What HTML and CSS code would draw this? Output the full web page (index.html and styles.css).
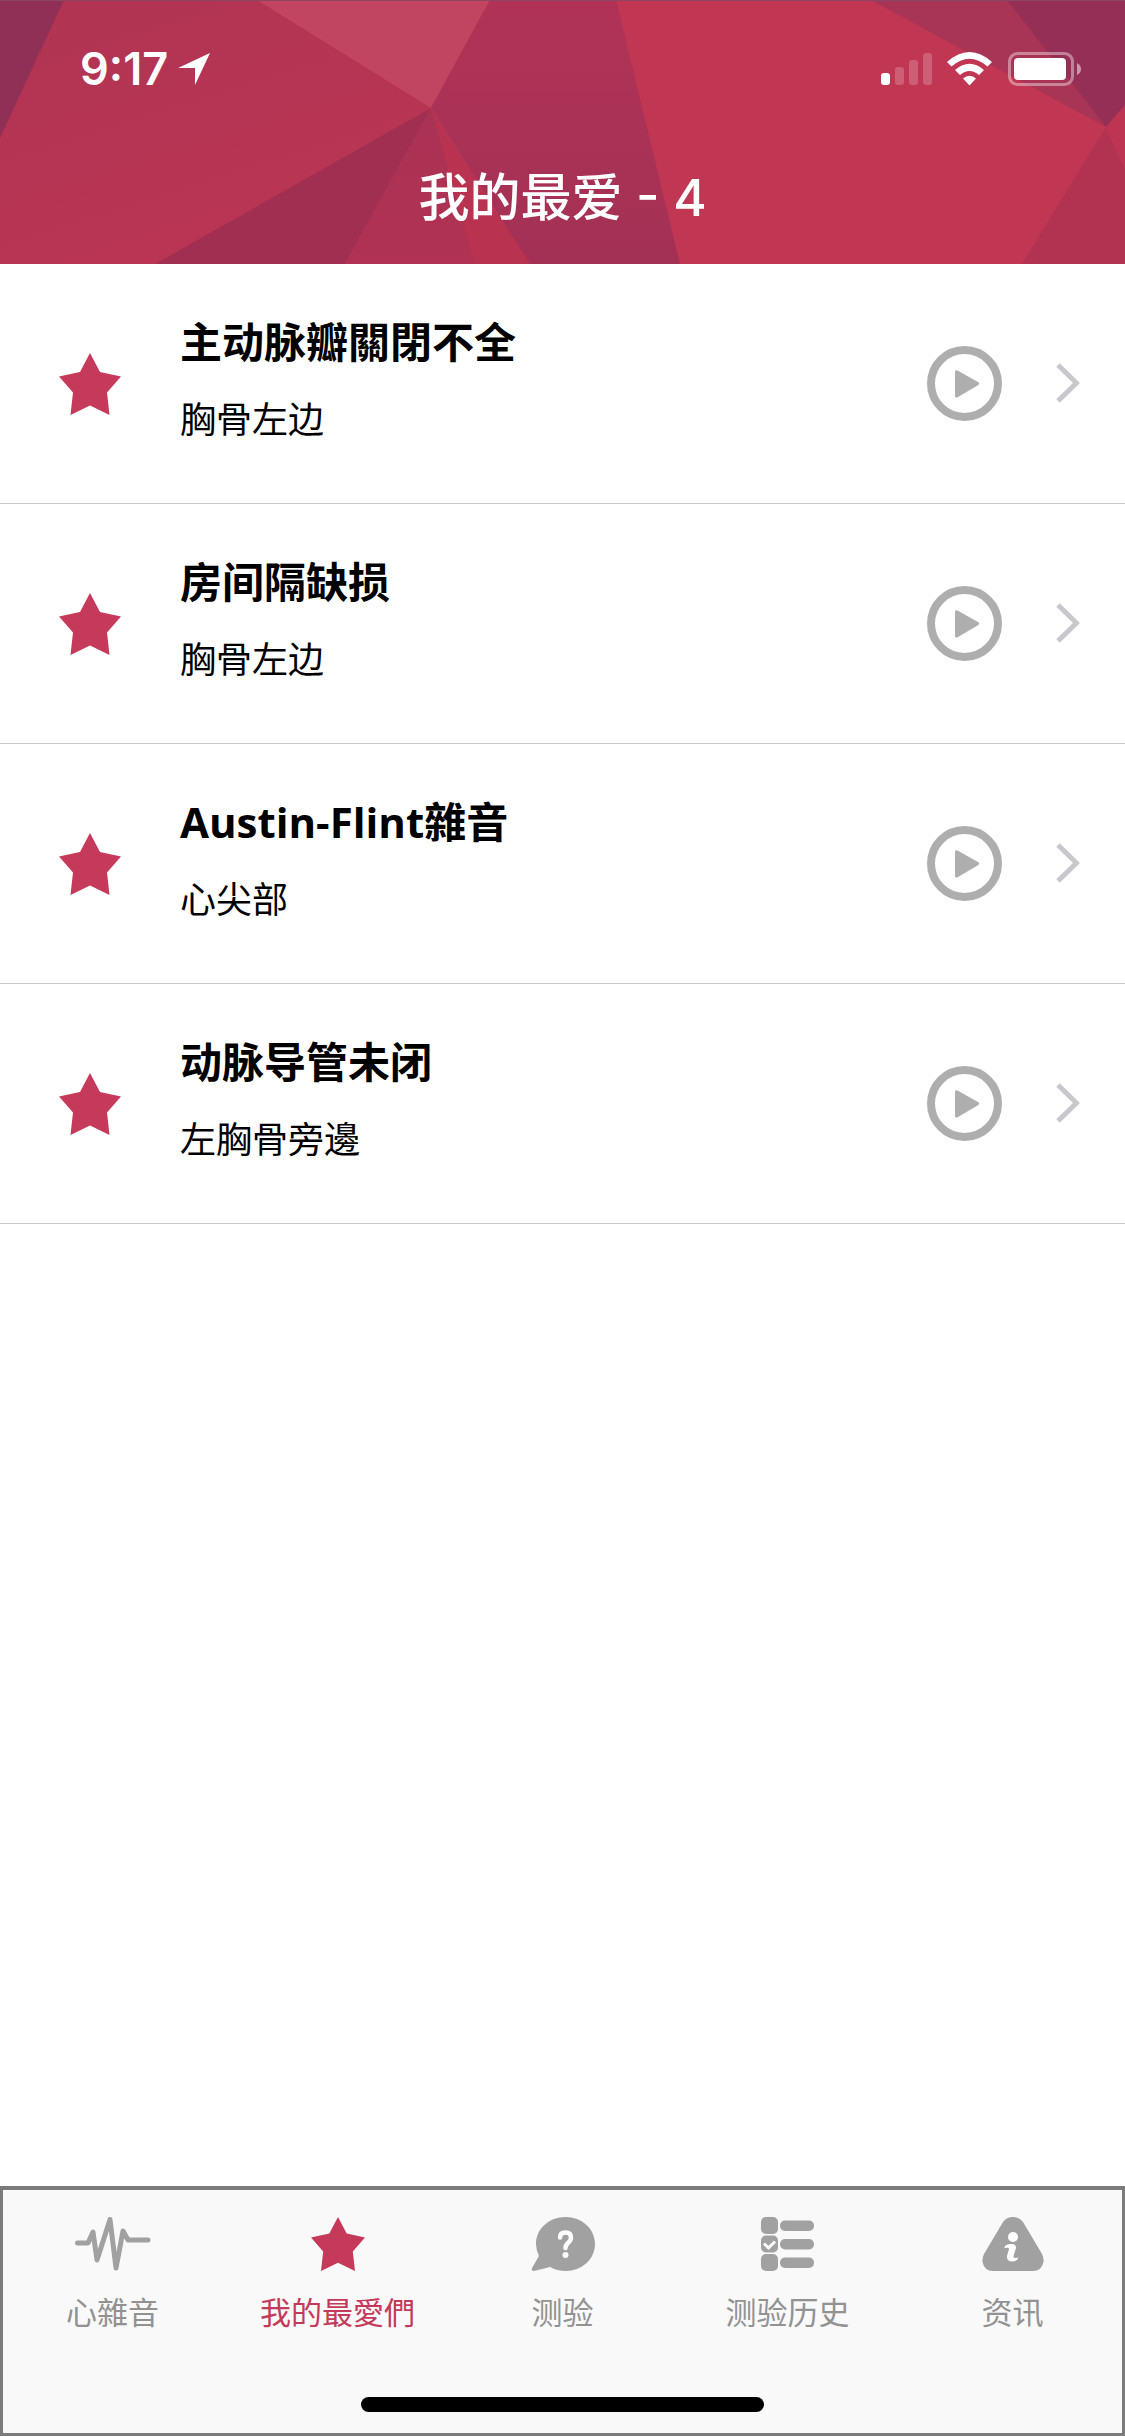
FILE: index.html
```html
<!DOCTYPE html>
<html lang="zh-CN">
<head>
<meta charset="utf-8">
<meta name="viewport" content="width=device-width, initial-scale=1">
<title>我的最爱</title>
<link rel="stylesheet" href="styles.css">
</head>
<body>
<svg class="symbols" aria-hidden="true">
  <symbol id="star" viewBox="0 0 62 62"><path d="M31 0 41 19 62 23.500 48 39.500 50.500 62 31 52.500 11.500 62 14 39.500 0 23.500 21 19Z"/></symbol>
  <symbol id="play" viewBox="0 0 75 75"><circle cx="37.500" cy="37.500" r="33.500" fill="none" stroke="currentColor" stroke-width="8"/><path d="M28 26.500Q28 23 31 24.800L51 36Q53.500 37.500 51 39.200L31 51Q28 52.800 28 49.500Z"/></symbol>
  <symbol id="chevron" viewBox="0 0 24 40"><path d="M2 2 20.500 20 2 38" fill="none" stroke="currentColor" stroke-width="5"/></symbol>
</svg>

<header class="header">
  <svg class="header-art" viewBox="0 0 1125 264" preserveAspectRatio="none" aria-hidden="true">
    <defs>
      <linearGradient id="left" x1="0" y1="0" x2=".6" y2="1"><stop offset="0" stop-color="#b03453"/><stop offset="1" stop-color="#bb3553"/></linearGradient>
      <linearGradient id="mid" x1="0" y1="0" x2="0" y2="1"><stop offset="0" stop-color="#b03357"/><stop offset="1" stop-color="#a33155"/></linearGradient>
      <linearGradient id="fan" x1="0" y1="0" x2="0" y2="1"><stop offset="0" stop-color="#a93254"/><stop offset="1" stop-color="#b13253"/></linearGradient>
    </defs>
    <path fill="url(#left)" d="M0 0H500V264H0Z"/>
    <path fill="#903057" d="M0 0H64L5 127 0 138Z"/>
    <path fill="#c14460" d="M257 0H490L431 108Z"/>
    <path fill="#a12f52" d="M431 108 155 264H345Z"/>
    <path fill="url(#fan)" d="M431 108 345 264H480Z"/>
    <path fill="url(#mid)" d="M490 0H620L684 264H530L431 108Z"/>
    <path fill="#b93350" d="M431 108 475 264H530L437 122Z"/>
    <path fill="#c03653" d="M616 0H1125V264H680Z"/>
    <path fill="#a83456" d="M871 0H1007L1106 127Z"/>
    <path fill="#952f55" d="M1007 0H1125V105L1106 127Z"/>
    <path fill="#b23251" d="M1106 127 1022 264H1125V170Z"/>
    <path fill="#bd3553" d="M1106 127 1125 105V170Z"/>
    <path fill="#8d4564" d="M0 0H1125V1H0Z"/>
  </svg>
  <div class="status">
    <div class="status-side">
      <span class="time">9:17</span>
      <svg class="locate" width="32" height="32" viewBox="0 0 32 32" aria-hidden="true"><path d="M32 0 17 32V15H0Z" fill="currentColor"/></svg>
    </div>
    <svg class="indicators" width="200" height="34" viewBox="881 52 200 34" fill="#fff" aria-hidden="true">
      <rect x="881" y="73" width="9" height="12" rx="3"/>
      <g opacity=".2"><rect x="895" y="67" width="9" height="18" rx="3"/><rect x="909" y="60" width="9" height="25" rx="3"/><rect x="923" y="53" width="9" height="32" rx="3"/></g>
      <path d="M947 62Q969.500 42 992 62L987.500 66.500Q969.500 51 951.500 66.500ZM955 70Q969.500 57.500 984 70L979 75Q969.500 67 960 75ZM963 78.500Q969.500 73 976 78.500L969.500 85.500Z"/>
      <rect x="1009.500" y="53.500" width="63" height="31" rx="8" fill="none" stroke="#fff" stroke-width="3" opacity=".4"/>
      <rect x="1014" y="58" width="52" height="22" rx="4"/>
      <path d="M1077 63Q1081 65 1081 69T1077 75Z" opacity=".5"/>
    </svg>
  </div>
  <h1 class="title">我的最爱 - 4</h1>
</header>

<main class="main">
  <ul class="list">
    <li class="row">
      <button class="icon-button" aria-label="取消收藏"><svg class="star" aria-hidden="true"><use href="#star"/></svg></button>
      <a class="entry" href="#"><span class="name">主动脉瓣關閉不全</span><span class="place">胸骨左边</span></a>
      <button class="icon-button" aria-label="播放"><svg class="play" aria-hidden="true"><use href="#play"/></svg></button>
      <a class="more" href="#" aria-label="详情"><svg class="chevron" aria-hidden="true"><use href="#chevron"/></svg></a>
    </li>
    <li class="row">
      <button class="icon-button" aria-label="取消收藏"><svg class="star" aria-hidden="true"><use href="#star"/></svg></button>
      <a class="entry" href="#"><span class="name">房间隔缺损</span><span class="place">胸骨左边</span></a>
      <button class="icon-button" aria-label="播放"><svg class="play" aria-hidden="true"><use href="#play"/></svg></button>
      <a class="more" href="#" aria-label="详情"><svg class="chevron" aria-hidden="true"><use href="#chevron"/></svg></a>
    </li>
    <li class="row">
      <button class="icon-button" aria-label="取消收藏"><svg class="star" aria-hidden="true"><use href="#star"/></svg></button>
      <a class="entry" href="#"><span class="name">Austin-Flint雜音</span><span class="place">心尖部</span></a>
      <button class="icon-button" aria-label="播放"><svg class="play" aria-hidden="true"><use href="#play"/></svg></button>
      <a class="more" href="#" aria-label="详情"><svg class="chevron" aria-hidden="true"><use href="#chevron"/></svg></a>
    </li>
    <li class="row">
      <button class="icon-button" aria-label="取消收藏"><svg class="star" aria-hidden="true"><use href="#star"/></svg></button>
      <a class="entry" href="#"><span class="name">动脉导管未闭</span><span class="place">左胸骨旁邊</span></a>
      <button class="icon-button" aria-label="播放"><svg class="play" aria-hidden="true"><use href="#play"/></svg></button>
      <a class="more" href="#" aria-label="详情"><svg class="chevron" aria-hidden="true"><use href="#chevron"/></svg></a>
    </li>
  </ul>
</main>

<footer class="footer">
  <nav class="tabs">
    <a class="tab" href="#">
      <svg width="76" height="54" viewBox="0 0 76 54" aria-hidden="true"><path d="M2.500 26H13L18 15 22 43 35 2.500 41 51 48 14 53 23H73" fill="none" stroke="#a1a1a1" stroke-width="5" stroke-linecap="round" stroke-linejoin="round"/></svg>
      <span>心雜音</span>
    </a>
    <a class="tab tab-active" href="#" aria-current="page">
      <svg width="54" height="54" aria-hidden="true"><use href="#star"/></svg>
      <span>我的最愛們</span>
    </a>
    <a class="tab" href="#">
      <svg width="64" height="54" viewBox="0 0 64 54" aria-hidden="true"><path d="M34.500 0C51 0 64 12 64 27S51 54 34.500 54Q26 54 19 50L3 54Q0 54 1 51L8 39Q5 33 5 27C5 12 18 0 34.500 0Z" fill="#a1a1a1"/><path d="M29 20.500Q29 15.500 34.500 15.500T40 20.500Q40 23.500 37 26 34.500 28 34.500 31" fill="none" stroke="#fff" stroke-width="4.500" stroke-linecap="round"/><circle cx="34.500" cy="38" r="3" fill="#fff"/></svg>
      <span>测验</span>
    </a>
    <a class="tab" href="#">
      <svg width="54" height="54" viewBox="0 0 54 54" fill="#a1a1a1" aria-hidden="true"><rect width="17" height="17" rx="5"/><rect y="18.500" width="17" height="17" rx="5"/><rect y="37" width="17" height="17" rx="5"/><rect x="19" y="3.500" width="34" height="10.500" rx="5"/><rect x="19" y="22" width="34" height="10.500" rx="5"/><rect x="19" y="40.500" width="34" height="10.500" rx="5"/><path d="M3 26.500 7.500 31 14 24.500" fill="none" stroke="#fff" stroke-width="3"/></svg>
      <span>测验历史</span>
    </a>
    <a class="tab" href="#">
      <svg width="62" height="54" viewBox="0 0 62 54" aria-hidden="true"><path d="M21 5Q24.500 0 31 0T41 5L60 37Q62 41 61.500 45 59.500 54 51 54H11Q2.500 54 .5 45 0 41 2 37Z" fill="#a1a1a1"/><circle cx="31" cy="20" r="5" fill="#fff"/><path d="M22.500 30Q23.500 27.500 28 27 34.500 26.500 34 31L31.500 39Q31 42 36.500 40.500 35 44.500 30.500 44.500 24.500 44.500 25 39L27 32Q27 30 22.500 31Z" fill="#fff"/></svg>
      <span>资讯</span>
    </a>
  </nav>
  <div class="home-bar"></div>
</footer>
</body>
</html>
```
FILE: styles.css
```css
* {
  box-sizing: border-box;
}

body {
  margin: 0;
  min-height: 100vh;
  display: flex;
  flex-direction: column;
  background: #fff;
  color: #000;
  font-family: "Open Sans", "Noto Sans CJK SC", sans-serif;
}

a {
  color: inherit;
  text-decoration: none;
}

.symbols {
  display: none;
}

/* Header */
.header {
  position: relative;
  min-height: 264px;
  padding: 39px 44px 0 80px;
  background: #b53453;
  color: #fff;
}

.header-art {
  position: absolute;
  inset: 0;
  width: 100%;
  height: 100%;
}

.status {
  position: relative;
  display: flex;
  justify-content: space-between;
  align-items: center;
  height: 60px;
}

.status-side {
  display: flex;
  align-items: center;
  gap: 10px;
}

.time {
  font: 600 45px/60px Inter, sans-serif;
}

.title {
  position: relative;
  margin: 64px 0 0;
  padding-right: 36px;
  font-family: Inter, "Noto Sans CJK SC", sans-serif;
  font-size: 51px;
  font-weight: 500;
  line-height: 70px;
  text-align: center;
}

/* Favourites list */
.main {
  flex: 1;
}

.list {
  margin: 0;
  padding: 0;
  list-style: none;
}

.row {
  display: flex;
  align-items: center;
  height: 240px;
  padding: 0 45px 0 59px;
  border-bottom: 1px solid #c8c7cc;
}

.icon-button {
  display: flex;
  padding: 0;
  border: 0;
  background: none;
  color: #aeaeae;
}

.icon-button svg,
.chevron {
  display: block;
  fill: currentColor;
}

.icon-button .star {
  width: 62px;
  height: 62px;
  color: #c5395a;
}

.play {
  width: 75px;
  height: 75px;
}

.more {
  margin-left: 54px;
  padding-bottom: 2px;
  color: #c7c7cc;
}

.chevron {
  width: 24px;
  height: 40px;
}

.entry {
  flex: 1;
  display: flex;
  flex-direction: column;
  gap: 18px;
  margin-left: 59px;
  padding-bottom: 5px;
}

.name {
  font-size: 42px;
  font-weight: 700;
  line-height: 60px;
}

.place {
  font-size: 36px;
  line-height: 60px;
}

/* Tab bar */
.footer {
  display: flex;
  flex-direction: column;
  align-items: center;
  min-height: 250px;
  padding-bottom: 21px;
  border: 3px solid #7b7b7b;
  border-top-width: 4px;
  background: #f9f9f9;
}

.tabs {
  display: flex;
  align-self: stretch;
  flex: 1;
  margin: 0 -3px;
  padding-top: 27px;
}

.tab {
  flex: 1;
  display: flex;
  flex-direction: column;
  align-items: center;
  gap: 21px;
  color: #929292;
  font-size: 31px;
  line-height: 40px;
}

.tab-active {
  color: #c5395a;
  fill: currentColor;
}

.home-bar {
  width: 36%;
  height: 15px;
  border-radius: 8px;
  background: #000;
}
```
